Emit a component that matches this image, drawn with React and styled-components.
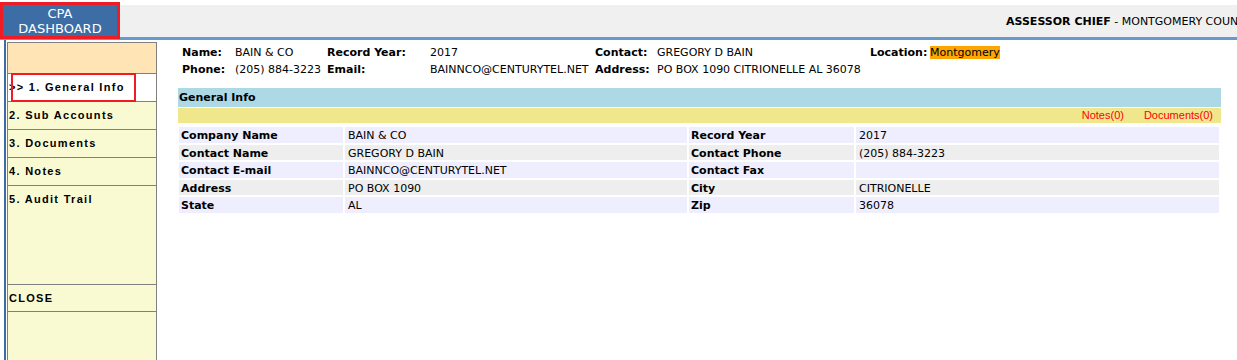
import React from "react";
import styled, { createGlobalStyle } from "styled-components";

const GlobalStyle = createGlobalStyle`
  html, body {
    margin: 0;
    padding: 0;
    background: #ffffff;
    font-family: "DejaVu Sans", Verdana, sans-serif;
    color: #000000;
  }
`;

const Page = styled.div`
  height: 100vh;
  overflow: hidden;
`;

//Top band with the dashboard tab and the user title
const HeaderBar = styled.div`
  display: flex;
  align-items: flex-start;
  height: 32px;
  margin-top: 5px;
  background-color: #f0f0f0;
  border-bottom: 3px solid #6699cc;
  white-space: nowrap;
`;

const DashboardTab = styled.div`
  flex-shrink: 0;
  box-sizing: border-box;
  width: 120px;
  height: 37px;
  margin-top: -3px;
  border: 3px solid #ee1c25;
  background-color: #3c6da5;
  color: #ffffff;
  font-size: 13px;
  line-height: 15px;
  text-align: center;
  padding-top: 1px;
`;

const UserTitle = styled.div`
  flex-shrink: 0;
  margin-left: 886px;
  margin-top: 10px;
  font-size: 11px;
  line-height: 14px;
  color: #000000;

  b {
    font-weight: bold;
  }
`;

const Body = styled.div`
  display: flex;
  align-items: flex-start;
`;

const SideRail = styled.div`
  margin-left: 4px;
  border-left: 2px solid #3c6da5;
  padding-left: 1px;
  padding-top: 2px;
  height: 330px;
`;

const SideMenu = styled.div`
  box-sizing: border-box;
  width: 150px;
  height: 330px;
  border: 1px solid #808080;
  background-color: #fafad2;
  font-family: "Liberation Sans", Arial, sans-serif;
  font-size: 11px;
  font-weight: bold;
  letter-spacing: 1.3px;
`;

const MenuHead = styled.div`
  height: 30px;
  background-color: #ffe4b5;
  border-bottom: 1px solid #808080;
`;

const MenuItem = styled.div`
  position: relative;
  height: ${(p) => p.$h || 27}px;
  box-sizing: border-box;
  padding: 7px 0 0 1px;
  line-height: 13px;
  border-bottom: 1px solid #808080;
  background-color: ${(p) => (p.$active ? "#ffffff" : "transparent")};
  white-space: nowrap;
`;

//Red highlight drawn over the active menu entry
const Highlight = styled.div`
  position: absolute;
  left: 3px;
  top: -1px;
  width: 125px;
  height: 29px;
  box-sizing: border-box;
  border: 2px solid #ee1c25;
`;

const Main = styled.div`
  margin-left: 21px;
  width: 1043px;
  padding-top: 4px;
`;

const Summary = styled.div`
  display: grid;
  grid-template-columns: 53px 92px 103px 165px 62px 213px 60px auto;
  padding-left: 4px;
  font-size: 11px;
  line-height: 17px;
  white-space: nowrap;
`;

const SumLabel = styled.div`
  font-weight: bold;
`;

const SumValue = styled.div``;

const Mark = styled.span`
  background-color: #ffa500;
`;

const SectionBar = styled.div`
  margin-top: 10px;
  height: 19px;
  background-color: #add8e6;
  font-size: 11px;
  font-weight: bold;
  line-height: 20px;
  padding-left: 1px;
`;

const LinkBar = styled.div`
  margin-top: 1px;
  height: 15px;
  background-color: #f0e68c;
  display: flex;
  justify-content: flex-end;
  gap: 20px;
  padding-right: 8px;
  font-family: "Liberation Sans", Arial, sans-serif;
  font-size: 11px;
  line-height: 15px;
`;

const RedLink = styled.span`
  color: #ff0000;
`;

const InfoGrid = styled.div`
  display: grid;
  grid-template-columns: 164px 342px 165px 363px;
  gap: 2px;
  padding: 4px 0 0 1px;
  font-size: 11px;
`;

const Cell = styled.div`
  height: 15.5px;
  line-height: 17px;
  padding-left: ${(p) => (p.$label ? 2 : 3)}px;
  font-weight: ${(p) => (p.$label ? "bold" : "normal")};
  background-color: ${(p) => (p.$alt ? "#eeeeee" : "#eeeeff")};
  white-space: nowrap;
  overflow: hidden;
`;

const menu = [
  { text: "2. Sub Accounts" },
  { text: "3. Documents" },
  { text: "4. Notes" },
  { text: "5. Audit Trail", h: 99 },
  { text: "CLOSE", h: 27 },
];

const rows = [
  ["Company Name", "BAIN & CO", "Record Year", "2017"],
  ["Contact Name", "GREGORY D BAIN", "Contact Phone", "(205) 884-3223"],
  ["Contact E-mail", "BAINNCO@CENTURYTEL.NET", "Contact Fax", ""],
  ["Address", "PO BOX 1090", "City", "CITRIONELLE"],
  ["State", "AL", "Zip", "36078"],
];

const App = () => {
  return (
    <Page>
      <GlobalStyle />
      <HeaderBar>
        <DashboardTab>
          CPA
          <br />
          DASHBOARD
        </DashboardTab>
        <UserTitle>
          <b>ASSESSOR CHIEF</b> - MONTGOMERY COUNTY
        </UserTitle>
      </HeaderBar>
      <Body>
        <SideRail>
          <SideMenu>
            <MenuHead />
            <MenuItem $active $h={28}>
              &gt;&gt; 1. General Info
              <Highlight />
            </MenuItem>
            {menu.map((m) => (
              <MenuItem key={m.text} $h={m.h ? m.h : 28}>
                {m.text}
              </MenuItem>
            ))}
          </SideMenu>
        </SideRail>
        <Main>
          <Summary>
            <SumLabel>Name:</SumLabel>
            <SumValue>BAIN &amp; CO</SumValue>
            <SumLabel>Record Year:</SumLabel>
            <SumValue>2017</SumValue>
            <SumLabel>Contact:</SumLabel>
            <SumValue>GREGORY D BAIN</SumValue>
            <SumLabel>Location:</SumLabel>
            <SumValue>
              <Mark>Montgomery</Mark>
            </SumValue>
            <SumLabel>Phone:</SumLabel>
            <SumValue>(205) 884-3223</SumValue>
            <SumLabel>Email:</SumLabel>
            <SumValue>BAINNCO@CENTURYTEL.NET</SumValue>
            <SumLabel>Address:</SumLabel>
            <SumValue>PO BOX 1090 CITRIONELLE AL 36078</SumValue>
          </Summary>
          <SectionBar>General Info</SectionBar>
          <LinkBar>
            <RedLink>Notes(0)</RedLink>
            <RedLink>Documents(0)</RedLink>
          </LinkBar>
          <InfoGrid>
            {rows.map((r, i) => (
              <React.Fragment key={r[0]}>
                <Cell $label $alt={i % 2 === 1}>{r[0]}</Cell>
                <Cell $alt={i % 2 === 1}>{r[1]}</Cell>
                <Cell $label $alt={i % 2 === 1}>{r[2]}</Cell>
                <Cell $alt={i % 2 === 1}>{r[3]}</Cell>
              </React.Fragment>
            ))}
          </InfoGrid>
        </Main>
      </Body>
    </Page>
  );
};

export default App;
